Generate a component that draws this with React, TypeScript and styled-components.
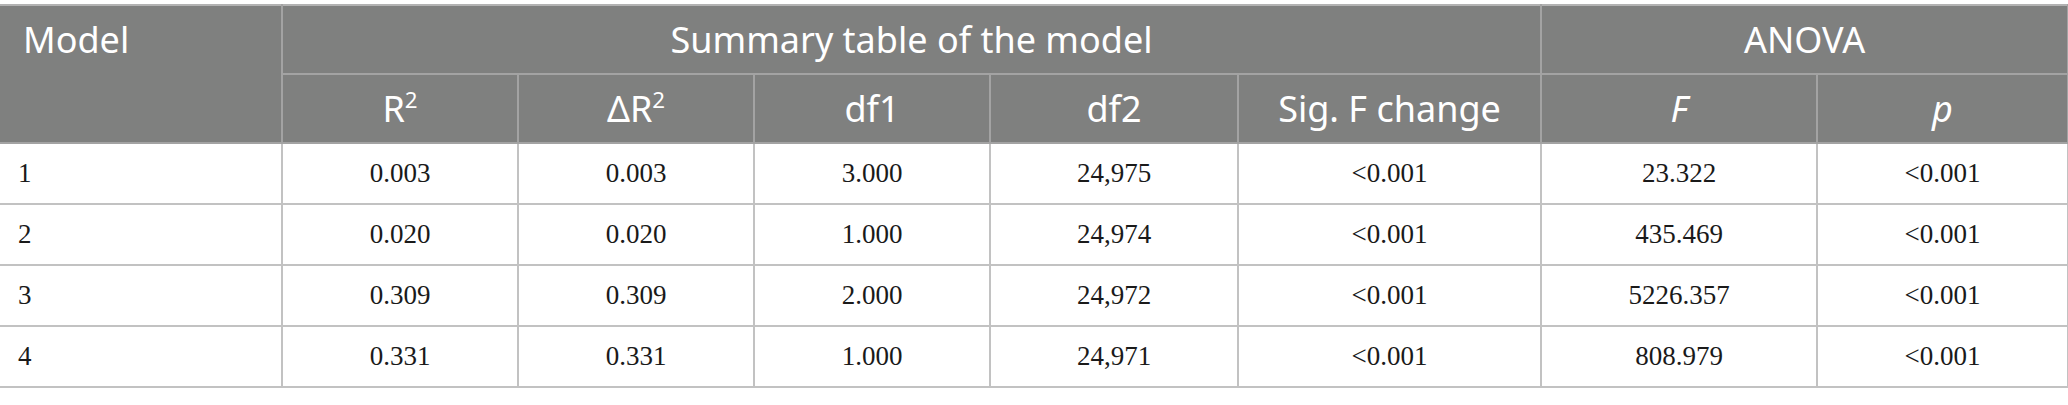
import React from 'react';
import styled, { createGlobalStyle } from 'styled-components';

const GlobalStyle = createGlobalStyle`
  html, body {
    margin: 0;
    padding: 0;
    background: #ffffff;
  }
`;

const Table = styled.table`
  margin-top: 4px;
  width: 2068px;
  table-layout: fixed;
  border-collapse: collapse;
  border-top: 2px solid #b2b2b2;
  border-bottom: 2px solid #c2c2c2;
  border-right: 2px solid #b2b2b2;
`;

const HeadCell = styled.th<{ $align?: 'left' | 'center'; $top?: boolean }>`
  background: #7f807f;
  color: #ffffff;
  font-family: 'Noto Sans', 'Open Sans', sans-serif;
  font-size: 36px;
  font-weight: 400;
  padding: 0 ${(p) => (p.$align === 'left' ? '0 0 23px' : '0')};
  padding-left: ${(p) => (p.$align === 'left' ? '23px' : '0')};
  text-align: ${(p) => p.$align || 'center'};
  vertical-align: ${(p) => (p.$top ? 'top' : 'middle')};
  line-height: 67px;
  border: 2px solid #a3a3a3;
  border-top: none;
  border-left: none;
  white-space: nowrap;
`;

const HeadRow = styled.tr<{ $height: number }>`
  height: ${(p) => p.$height}px;
`;

const Cell = styled.td<{ $align?: 'left' | 'center' }>`
  font-family: 'Liberation Serif', 'Times New Roman', serif;
  font-size: 27px;
  color: #1a1a1a;
  height: 59px;
  padding: 0;
  padding-left: ${(p) => (p.$align === 'left' ? '18px' : '0')};
  text-align: ${(p) => p.$align || 'center'};
  vertical-align: middle;
  border: 2px solid #c2c2c2;
  border-left: none;
  border-top: none;
`;

const Sup = styled.sup`
  font-size: 0.62em;
  vertical-align: 0.62em;
  line-height: 0;
`;

const Italic = styled.i`
  font-style: italic;
`;

const widths = [282, 236, 236, 236, 248, 303, 276, 251];

const rows = [
  ['1', '0.003', '0.003', '3.000', '24,975', '<0.001', '23.322', '<0.001'],
  ['2', '0.020', '0.020', '1.000', '24,974', '<0.001', '435.469', '<0.001'],
  ['3', '0.309', '0.309', '2.000', '24,972', '<0.001', '5226.357', '<0.001'],
  ['4', '0.331', '0.331', '1.000', '24,971', '<0.001', '808.979', '<0.001'],
];

export default function App() {
  return (
    <>
      <GlobalStyle />
      <Table>
        <colgroup>
          {widths.map((w, i) => (
            <col key={i} style={{ width: w }} />
          ))}
        </colgroup>
        <thead>
          <HeadRow $height={67}>
            <HeadCell rowSpan={2} $align="left" $top>
              Model
            </HeadCell>
            <HeadCell colSpan={5}>Summary table of the model</HeadCell>
            <HeadCell colSpan={2}>ANOVA</HeadCell>
          </HeadRow>
          <HeadRow $height={69}>
            <HeadCell>
              R<Sup>2</Sup>
            </HeadCell>
            <HeadCell>
              ΔR<Sup>2</Sup>
            </HeadCell>
            <HeadCell>df1</HeadCell>
            <HeadCell>df2</HeadCell>
            <HeadCell>Sig. F change</HeadCell>
            <HeadCell>
              <Italic>F</Italic>
            </HeadCell>
            <HeadCell>
              <Italic>p</Italic>
            </HeadCell>
          </HeadRow>
        </thead>
        <tbody>
          {rows.map((r) => (
            <tr key={r[0]}>
              {r.map((v, i) => (
                <Cell key={i} $align={i === 0 ? 'left' : 'center'}>
                  {v}
                </Cell>
              ))}
            </tr>
          ))}
        </tbody>
      </Table>
    </>
  );
}
